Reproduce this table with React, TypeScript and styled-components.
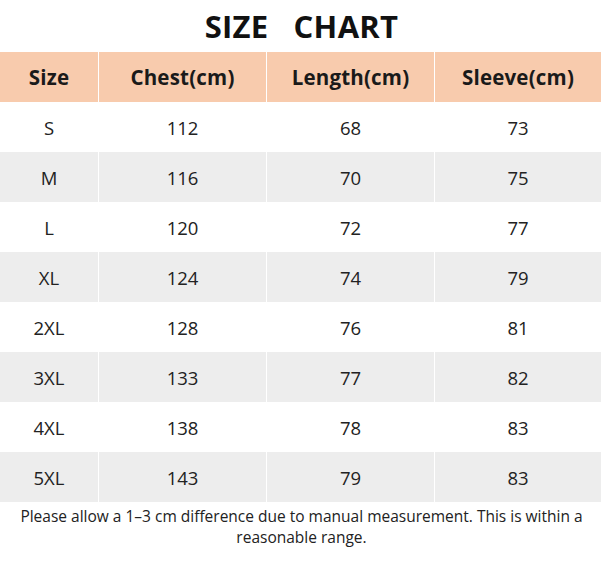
import styled, { createGlobalStyle } from "styled-components";

const GlobalStyle = createGlobalStyle`
  html, body {
    margin: 0;
    padding: 0;
    background: #ffffff;
  }
  body {
    font-family: "Open Sans", "Noto Sans", sans-serif;
    color: #1a1a1a;
  }
`;

const headers = ["Size", "Chest(cm)", "Length(cm)", "Sleeve(cm)"];

const rows = [
  ["S", "112", "68", "73"],
  ["M", "116", "70", "75"],
  ["L", "120", "72", "77"],
  ["XL", "124", "74", "79"],
  ["2XL", "128", "76", "81"],
  ["3XL", "133", "77", "82"],
  ["4XL", "138", "78", "83"],
  ["5XL", "143", "79", "83"],
];

const App = () => {
  return (
    <Page>
      <GlobalStyle />
      <Title>SIZE&nbsp;&nbsp;&nbsp;CHART</Title>
      <Table>
        {headers.map((h) => (
          <HeadCell key={h}>{h}</HeadCell>
        ))}
        {rows.map((row, i) =>
          row.map((value, j) => (
            <Cell key={i + "-" + j} striped={i % 2 === 1}>
              {value}
            </Cell>
          ))
        )}
      </Table>
      <Note>
        Please allow a 1–3 cm difference due to manual measurement. This is
        within a reasonable range.
      </Note>
    </Page>
  );
};

export default App;

const Page = styled.div`
  width: 603px;
  height: 563px;
  display: flex;
  flex-direction: column;
`;

const Title = styled.div`
  height: 52px;
  display: flex;
  align-items: center;
  justify-content: center;
  font-size: 31px;
  font-weight: 700;
  color: #111;
  letter-spacing: 0.3px;
`;

const Table = styled.div`
  width: 601px;
  display: grid;
  grid-template-columns: 98px 167px 167px 166px;
  grid-auto-rows: 50px;
  column-gap: 1px;
  background: #ffffff;
`;

const HeadCell = styled.div`
  background: #f8cbad;
  display: flex;
  align-items: center;
  justify-content: center;
  font-size: 20.5px;
  font-weight: 700;
  color: #1a1a1a;
  letter-spacing: 0.2px;
`;

const Cell = styled.div<{ striped: boolean }>`
  background: ${(props) => (props.striped ? "#ededed" : "#ffffff")};
  display: flex;
  align-items: center;
  justify-content: center;
  font-size: 18.5px;
  color: #222;
`;

const Note = styled.div`
  padding: 4px 14px 0 14px;
  text-align: center;
  font-size: 15.5px;
  line-height: 21px;
  color: #222;
`;
